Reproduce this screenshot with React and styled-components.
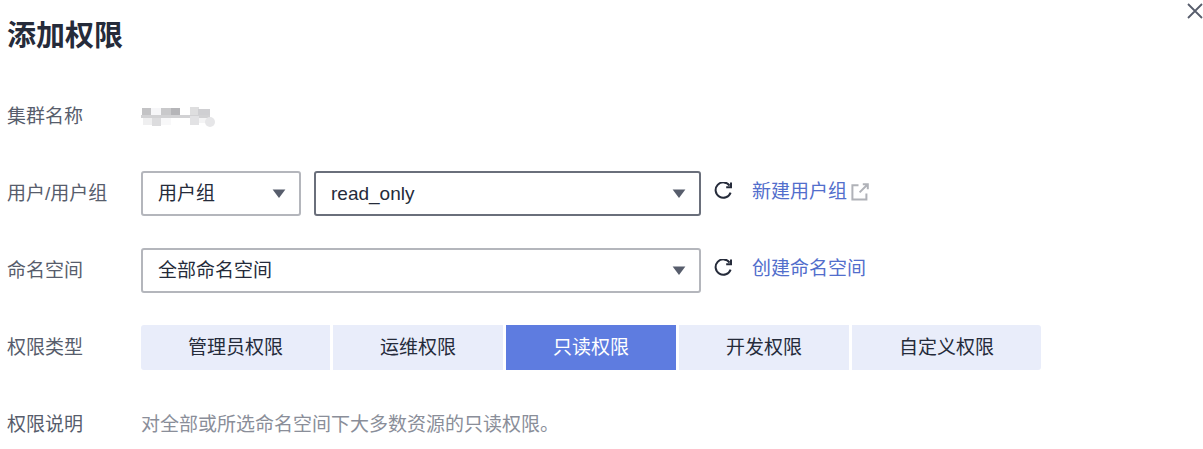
import React, { useState } from "react";
import styled, { createGlobalStyle } from "styled-components";

const permissionTypes = [
  { id: "admin", label: "管理员权限" },
  { id: "ops", label: "运维权限" },
  { id: "readonly", label: "只读权限" },
  { id: "develop", label: "开发权限" },
  { id: "custom", label: "自定义权限" },
];

const RefreshIcon = () => (
  <svg width="20" height="20" viewBox="0 0 20 20" fill="none" aria-hidden="true">
    <path
      d="M16.6 10.6A7.7 7.7 0 1 1 15.6 3.6"
      stroke="currentColor"
      strokeWidth="2"
    />
    <path d="M17 0.4V5.2H12.2" stroke="currentColor" strokeWidth="2" />
  </svg>
);

const ExternalIcon = () => (
  <svg width="18" height="18" viewBox="0 0 18 18" fill="none" aria-hidden="true">
    <path
      d="M7.5 2.2H1.4V16.6H15.4V10.5M11.8 1.2H16.8V6.2M16.5 1.5L8.6 9.4"
      stroke="#b0b2b8"
      strokeWidth="2"
    />
  </svg>
);

const MaskedName = () => (
  <svg width="76" height="21" viewBox="0 0 76 21" role="img" aria-label="集群名称">
    <rect x="1" y="2" width="9" height="7" fill="#c3c3c5" />
    <rect x="10" y="2" width="10" height="8" fill="#f6f6f8" />
    <rect x="20" y="2" width="10" height="7" fill="#c9c9cb" />
    <rect x="30" y="2" width="9" height="7" fill="#b5b5b8" />
    <rect x="49" y="1" width="9" height="9" fill="#dededf" />
    <rect x="57" y="3" width="12" height="8" fill="#cfcfd2" />
    <rect x="0" y="9" width="69" height="3" fill="#d2d2d4" />
    <rect x="2" y="12" width="9" height="7" fill="#efeff0" />
    <rect x="11" y="12" width="9" height="8" fill="#dcdcde" />
    <rect x="20" y="12" width="10" height="7" fill="#f8f8f9" />
    <rect x="49" y="10" width="9" height="9" fill="#e2e2e4" />
    <rect x="58" y="12" width="10" height="5" fill="#f4f4f5" />
    <circle cx="69" cy="16" r="5" fill="#e6e6e8" />
  </svg>
);

const Select = ({ id, label, options, active, narrow }) => (
  <SelectBox $narrow={narrow}>
    <select id={id} aria-label={label} data-active={active}>
      {options.map((option) => (
        <option key={option}>{option}</option>
      ))}
    </select>
    <svg width="14" height="10" viewBox="0 0 14 10" aria-hidden="true">
      <path d="M0.6 0.6H13.4L7 9Z" fill="#575d6c" />
    </svg>
  </SelectBox>
);

const App = () => {
  const [type, setType] = useState("readonly");

  return (
    <>
      <GlobalStyle />
      <Dialog role="dialog" aria-labelledby="dialog-title">
        <Header>
          <h1 id="dialog-title">添加权限</h1>
          <CloseButton type="button" aria-label="关闭">
            <svg width="16" height="16" viewBox="0 0 16 16" fill="none">
              <path
                d="M1 1L15 15M15 1L1 15"
                stroke="currentColor"
                strokeWidth="1.8"
              />
            </svg>
          </CloseButton>
        </Header>

        <Form onSubmit={(e) => e.preventDefault()}>
          <Row>
            <Label as="span">集群名称</Label>
            <MaskedName />
          </Row>
          <Row>
            <Label htmlFor="group">用户/用户组</Label>
            <Fields>
              <Select
                id="kind"
                label="用户类型"
                options={["用户组", "用户"]}
                narrow
              />
              <Select id="group" options={["read_only"]} active />
            </Fields>
            <Actions>
              <RefreshButton type="button" aria-label="刷新用户组">
                <RefreshIcon />
              </RefreshButton>
              <Link href="#group">
                新建用户组
                <ExternalIcon />
              </Link>
            </Actions>
          </Row>
          <Row>
            <Label htmlFor="namespace">命名空间</Label>
            <Fields>
              <Select id="namespace" options={["全部命名空间"]} />
            </Fields>
            <Actions>
              <RefreshButton type="button" aria-label="刷新命名空间">
                <RefreshIcon />
              </RefreshButton>
              <Link href="#namespace">创建命名空间</Link>
            </Actions>
          </Row>
          <Row>
            <Label as="span" id="type-label">
              权限类型
            </Label>
            <Segments role="group" aria-labelledby="type-label">
              {permissionTypes.map((item) => (
                <Segment
                  key={item.id}
                  type="button"
                  $selected={item.id === type}
                  aria-pressed={item.id === type}
                  onClick={() => setType(item.id)}
                >
                  {item.label}
                </Segment>
              ))}
            </Segments>
          </Row>
          <Row>
            <Label as="span">权限说明</Label>
            <Description>对全部或所选命名空间下大多数资源的只读权限。</Description>
          </Row>
        </Form>
      </Dialog>
    </>
  );
};

const GlobalStyle = createGlobalStyle`
  * {
    box-sizing: border-box;
  }

  body {
    margin: 0;
    background: #fff;
    color: #252b3a;
    font-family: "Liberation Sans", "Noto Sans CJK SC", sans-serif;
    font-size: 19px;
    line-height: 28px;
  }

  button,
  select {
    font: inherit;
    color: inherit;
  }
`;

const Dialog = styled.main`
  padding-left: 7px;
`;

const Header = styled.header`
  display: flex;
  justify-content: space-between;
  align-items: flex-start;

  h1 {
    margin: 0;
    padding-top: 16px;
    font-size: 29px;
    line-height: 40px;
    font-weight: 700;
  }
`;

const CloseButton = styled.button`
  display: flex;
  padding: 3px 0;
  border: 0;
  background: none;
  color: #575d6c;
  cursor: pointer;
`;

const Form = styled.form`
  display: flex;
  flex-direction: column;
  gap: 32px;
  padding-top: 38px;
`;

const Row = styled.div`
  display: flex;
  align-items: center;
  min-height: 45px;
`;

const Label = styled.label`
  flex: 0 0 134px;
  color: #575d6c;
`;

const Fields = styled.div`
  display: flex;
  flex: 0 1 560px;
  gap: 13px;
`;

const SelectBox = styled.div`
  position: relative;
  flex: ${({ $narrow }) => ($narrow ? "0 0 160px" : "1 1 0")};

  select {
    display: block;
    width: 100%;
    height: 45px;
    padding: 0 40px 0 15px;
    appearance: none;
    background: #fff;
    border: 2px solid #b4b6bc;
    border-radius: 3px;
    outline: none;
  }

  select[data-active="true"] {
    border-color: #6a6f7b;
  }

  svg {
    position: absolute;
    right: 15px;
    top: 18px;
    pointer-events: none;
  }
`;

const Actions = styled.div`
  display: flex;
  align-items: center;
  gap: 18px;
  padding: 0 0 3px 13px;
`;

const RefreshButton = styled.button`
  display: flex;
  padding: 0;
  border: 0;
  background: none;
  cursor: pointer;
`;

const Link = styled.a`
  display: flex;
  align-items: center;
  gap: 4px;
  color: #526ecc;
  text-decoration: none;
  white-space: nowrap;
`;

const Segments = styled.div`
  display: flex;
  gap: 3px;
`;

const Segment = styled.button`
  height: 45px;
  padding: 0 47px;
  border: 0;
  white-space: nowrap;
  cursor: pointer;
  background: ${({ $selected }) => ($selected ? "#5e7ce0" : "#e9edfa")};
  color: ${({ $selected }) => ($selected ? "#fff" : "#252b3a")};

  &:first-child {
    border-radius: 3px 0 0 3px;
  }

  &:last-child {
    border-radius: 0 3px 3px 0;
  }
`;

const Description = styled.p`
  margin: 0;
  color: #8a8e99;
`;

export default App;
